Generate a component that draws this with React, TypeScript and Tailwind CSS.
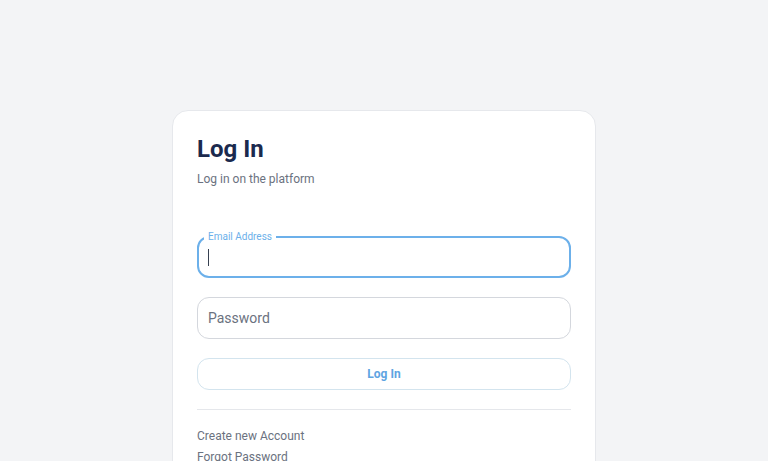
import React, { FC } from "react";

const App: FC = () => {
  return (
    <div
      className="min-h-screen w-full bg-[#f3f4f6] flex justify-center pt-[110px]"
      style={{ fontFamily: "Roboto, 'Noto Sans', sans-serif" }}
    >
      <div className="w-[424px] h-[400px] bg-white rounded-2xl border border-[#e6e8ec] px-6 pt-[22px]">
        {/* Header */}
        <h1 className="text-2xl leading-8 font-bold text-[#1b2a4e]">Log In</h1>
        <p className="mt-[6px] text-xs leading-4 text-[#6b7280]">Log in on the platform</p>

        {/* Email */}
        <div className="relative mt-[49px] h-[42px] rounded-xl border-2 border-[#6cb0ea] flex items-center px-[9px]">
          <span className="absolute -top-[8px] left-[5px] bg-white px-[4px] text-[10px] leading-[14px] text-[#6cb0ea]">
            Email Address
          </span>
          <span className="w-px h-[17px] bg-[#374151]" />
        </div>

        {/* Password */}
        <div className="mt-[19px] h-[42px] rounded-xl border border-[#d4d7dd] flex items-center px-[10px]">
          <span className="text-sm text-[#6b7280]">Password</span>
        </div>

        {/* Button */}
        <button className="mt-[19px] w-full h-[32px] rounded-xl border border-[#d3e4ee] text-xs font-bold text-[#5ea4e2]">
          Log In
        </button>

        <div className="mt-[19px] h-px bg-[#e5e7eb]" />

        {/* Links */}
        <div className="mt-[18px] flex flex-col gap-[5px] text-xs leading-4 text-[#6b7280]">
          <span>Create new Account</span>
          <span>Forgot Password</span>
        </div>
      </div>
    </div>
  );
};

export default App;
